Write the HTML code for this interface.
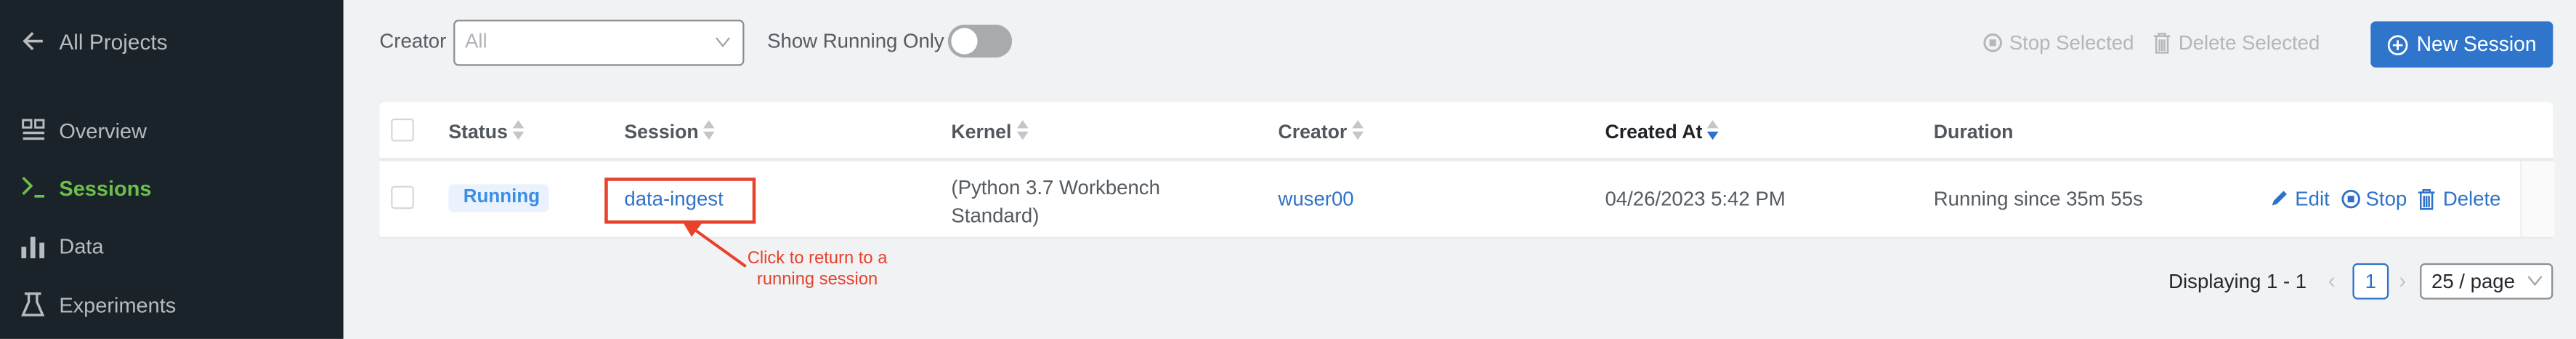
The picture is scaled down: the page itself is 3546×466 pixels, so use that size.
<!DOCTYPE html>
<html><head><meta charset="utf-8"><style>
html,body{margin:0;padding:0;width:3546px;height:466px;overflow:hidden;background:#f0f2f4}
#w{position:absolute;left:0;top:0;width:1568px;height:206px;transform:scale(2.26148);transform-origin:0 0;font-family:"Liberation Sans",sans-serif;font-size:12.2px;color:#555b61}
.a{position:absolute;white-space:nowrap}
.sb{position:absolute;left:0;top:0;width:209px;height:206px;background:#1a2329}
.nav{color:#b9bcbf;font-size:12.8px}
.th{color:#51575d;font-weight:bold;font-size:11.8px}
.blue{color:#2f72c9}
svg{position:absolute}
.so{display:inline-block;vertical-align:-1px;margin-left:3px}
</style></head><body><div id="w">
<div class="sb"></div>
<svg style="left:12px;top:17px" width="16" height="16" viewBox="0 0 16 16"><path d="M14 8H3M8 3L3 8l5 5" stroke="#b9bcbf" stroke-width="1.6" fill="none"/></svg>
<div class="a nav" style="left:36px;top:18px;font-size:13.2px">All Projects</div>
<svg style="left:13px;top:72px" width="15" height="15" viewBox="0 0 15 15"><rect x="1" y="1" width="5" height="4.5" stroke="#b9bcbf" stroke-width="1.3" fill="none"/><rect x="8.5" y="1" width="5" height="4.5" stroke="#b9bcbf" stroke-width="1.3" fill="none"/><rect x="1" y="8" width="13" height="1.5" fill="#b9bcbf"/><rect x="1" y="11.5" width="13" height="1.5" fill="#b9bcbf"/></svg>
<div class="a nav" style="left:36px;top:72px">Overview</div>
<svg style="left:12px;top:106px" width="16" height="16" viewBox="0 0 16 16"><path d="M2 2l5 5-5 5" stroke="#6cc04a" stroke-width="1.6" fill="none"/><rect x="9" y="12.5" width="6" height="1.6" fill="#6cc04a"/></svg>
<div class="a" style="left:36px;top:107px;color:#6cc04a;font-weight:bold;font-size:12.8px">Sessions</div>
<svg style="left:12px;top:142px" width="16" height="16" viewBox="0 0 16 16"><rect x="1" y="8" width="3" height="7" fill="#b9bcbf"/><rect x="6.5" y="2" width="3" height="13" fill="#b9bcbf"/><rect x="12" y="5.5" width="3" height="9.5" fill="#b9bcbf"/></svg>
<div class="a nav" style="left:36px;top:142px">Data</div>
<svg style="left:12px;top:177px" width="16" height="17" viewBox="0 0 16 17"><path d="M3 1.5h10M5.5 1.5v5L2 14.5h12L10.5 6.5v-5" stroke="#b9bcbf" stroke-width="1.5" fill="none"/></svg>
<div class="a nav" style="left:36px;top:178px">Experiments</div>

<div class="a" style="left:231px;top:18px">Creator</div>
<div class="a" style="left:276px;top:12px;width:175px;height:26px;background:#fff;border:1px solid #8a8f94;border-radius:3px"></div>
<div class="a" style="left:283px;top:18px;color:#b0b4b8">All</div>
<svg style="left:435px;top:22px" width="10" height="8" viewBox="0 0 10 8"><path d="M1 1l4 5 4-5" stroke="#a0a4a8" fill="none"/></svg>
<div class="a" style="left:467px;top:18px">Show Running Only</div>
<div class="a" style="left:577px;top:15px;width:39px;height:20px;border-radius:10px;background:#a8abae"></div>
<div class="a" style="left:579px;top:17px;width:16px;height:16px;border-radius:50%;background:#fff"></div>

<svg style="left:1207px;top:20px" width="12" height="12" viewBox="0 0 12 12"><circle cx="6" cy="6" r="5" stroke="#b4b7ba" stroke-width="1.3" fill="none"/><rect x="4" y="4" width="4" height="4" fill="#b4b7ba"/></svg>
<div class="a" style="left:1223px;top:19px;color:#b4b7ba">Stop Selected</div>
<svg style="left:1310px;top:19px" width="12" height="14" viewBox="0 0 12 14"><path d="M1 3h10M4 3V1.5h4V3M2.5 3.5v9.5h7V3.5M4.5 5v7M6 5v7M7.5 5v7" stroke="#b4b7ba" stroke-width="1.1" fill="none"/></svg>
<div class="a" style="left:1326px;top:19px;color:#b4b7ba">Delete Selected</div>
<div class="a" style="left:1443px;top:13px;width:111px;height:28px;background:#3075cc;border-radius:3px"></div>
<svg style="left:1453px;top:21px" width="13" height="13" viewBox="0 0 13 13"><circle cx="6.5" cy="6.5" r="5.5" stroke="#fff" stroke-width="1.2" fill="none"/><path d="M6.5 3.5v6M3.5 6.5h6" stroke="#fff" stroke-width="1.2"/></svg>
<div class="a" style="left:1471px;top:20px;color:#fff;font-size:12.5px">New Session</div>

<div class="a" style="left:231px;top:62px;width:1323px;height:83px;background:#fff;border-radius:3px"></div>
<div class="a" style="left:231px;top:96px;width:1323px;height:2px;background:#e8eaec"></div>
<div class="a" style="left:231px;top:144px;width:1323px;height:1px;background:#e8eaec"></div>
<div class="a" style="left:1534px;top:98px;width:20px;height:46px;background:#fafafa;border-left:1px solid #f0f0f0"></div>
<div class="a" style="left:238px;top:72px;width:12px;height:12px;border:1px solid #d5d8db;border-radius:2px"></div>
<div class="a" style="left:238px;top:113px;width:12px;height:12px;border:1px solid #d5d8db;border-radius:2px"></div>

<div class="a th" style="left:273px;top:73px">Status<svg class="so" style="position:static" width="7" height="12" viewBox="0 0 7 12"><path d="M0 5L3.5 0 7 5z" fill="#c4c7ca"/><path d="M0 7h7L3.5 12z" fill="#c4c7ca"/></svg></div>
<div class="a th" style="left:380px;top:73px">Session<svg class="so" style="position:static" width="7" height="12" viewBox="0 0 7 12"><path d="M0 5L3.5 0 7 5z" fill="#c4c7ca"/><path d="M0 7h7L3.5 12z" fill="#c4c7ca"/></svg></div>
<div class="a th" style="left:579px;top:73px">Kernel<svg class="so" style="position:static" width="7" height="12" viewBox="0 0 7 12"><path d="M0 5L3.5 0 7 5z" fill="#c4c7ca"/><path d="M0 7h7L3.5 12z" fill="#c4c7ca"/></svg></div>
<div class="a th" style="left:778px;top:73px">Creator<svg class="so" style="position:static" width="7" height="12" viewBox="0 0 7 12"><path d="M0 5L3.5 0 7 5z" fill="#c4c7ca"/><path d="M0 7h7L3.5 12z" fill="#c4c7ca"/></svg></div>
<div class="a th" style="left:977px;top:73px;color:#1f2327">Created At<svg class="so" style="position:static" width="7" height="12" viewBox="0 0 7 12"><path d="M0 5L3.5 0 7 5z" fill="#c4c7ca"/><path d="M0 7h7L3.5 12z" fill="#2f72c9"/></svg></div>
<div class="a th" style="left:1177px;top:73px">Duration</div>

<div class="a" style="left:273px;top:112px;width:61px;height:17px;background:#eaf3fd;border-radius:3px"></div>
<div class="a" style="left:282px;top:114px;color:#3b8ee8;font-weight:bold;font-size:11.5px">Running</div>
<div class="a" style="left:368px;top:108px;width:88px;height:24px;border:2px solid #e8412c"></div>
<div class="a blue" style="left:380px;top:114px">data-ingest</div>
<div class="a" style="left:579px;top:106px;line-height:17px">(Python 3.7 Workbench<br>Standard)</div>
<div class="a blue" style="left:778px;top:114px">wuser00</div>
<div class="a" style="left:977px;top:114px">04/26/2023 5:42 PM</div>
<div class="a" style="left:1177px;top:114px">Running since 35m 55s</div>
<svg style="left:1382px;top:114px" width="11" height="12" viewBox="0 0 11 12"><path d="M1 11l1-3 6-6 2 2-6 6z" fill="#2f72c9"/></svg>
<div class="a blue" style="left:1397px;top:114px">Edit</div>
<svg style="left:1425px;top:115px" width="12" height="12" viewBox="0 0 12 12"><circle cx="6" cy="6" r="5" stroke="#2f72c9" stroke-width="1.3" fill="none"/><rect x="4" y="4" width="4" height="4" fill="#2f72c9"/></svg>
<div class="a blue" style="left:1440px;top:114px">Stop</div>
<svg style="left:1471px;top:114px" width="12" height="14" viewBox="0 0 12 14"><path d="M1 3h10M4 3V1.5h4V3M2.5 3.5v9.5h7V3.5M4.5 5v7M6 5v7M7.5 5v7" stroke="#2f72c9" stroke-width="1.1" fill="none"/></svg>
<div class="a blue" style="left:1487px;top:114px">Delete</div>

<svg style="left:410px;top:132px" width="50" height="34" viewBox="0 0 50 34"><path d="M44 30L12 7" stroke="#e8412c" stroke-width="1.8"/><path d="M5 2l12 2-6 8z" fill="#e8412c"/></svg>
<div class="a" style="left:445px;top:151px;width:105px;text-align:center;color:#e8412c;font-size:10.5px;line-height:13px;white-space:normal">Click to return to a running session</div>

<div class="a" style="left:1320px;top:164px;color:#24282c">Displaying 1 - 1</div>
<div class="a" style="left:1417px;top:162px;color:#c4c7ca;font-size:14px">&lsaquo;</div>
<div class="a" style="left:1432px;top:160px;width:20px;height:20px;border:1px solid #2f72c9;border-radius:3px;background:#fff;text-align:center;line-height:20px;color:#2f72c9">1</div>
<div class="a" style="left:1460px;top:162px;color:#c4c7ca;font-size:14px">&rsaquo;</div>
<div class="a" style="left:1473px;top:160px;width:79px;height:20px;border:1px solid #8a8f94;border-radius:3px;background:#fff"></div>
<div class="a" style="left:1480px;top:164px;color:#24282c">25 / page</div>
<svg style="left:1538px;top:167px" width="10" height="8" viewBox="0 0 10 8"><path d="M1 1l4 5 4-5" stroke="#a0a4a8" fill="none"/></svg>
</div></body></html>
